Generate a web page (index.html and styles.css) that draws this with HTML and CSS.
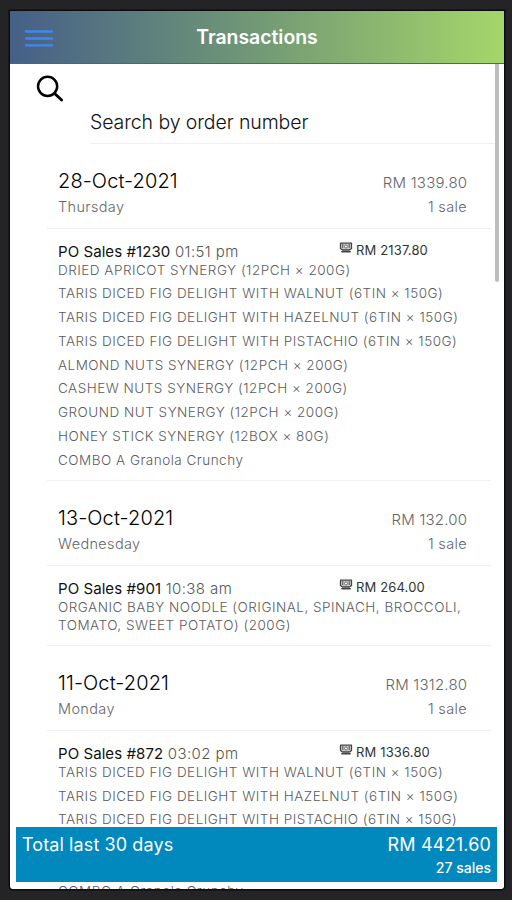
FILE: index.html
```
<!DOCTYPE html>
<html lang="en">
<head>
<meta charset="utf-8">
<title>Transactions</title>
<link rel="stylesheet" href="styles.css">
</head>
<body>
<svg class="defs" width="0" height="0" aria-hidden="true">
  <symbol id="cash" viewBox="0 0 14 12">
    <path d="M1.500 1.200h11v5.300l-2 1.500h-7l-2-1.500z" fill="#ccc" stroke="#444" stroke-width="1.300" stroke-linejoin="round"/>
    <circle cx="7" cy="4.500" r="1.500" fill="#fff" stroke="#555" stroke-width=".8"/>
    <path d="M3.800 2v4M10.200 2v4" stroke="#555" stroke-width="1"/>
    <path d="M2.800 9.800h8.400" stroke="#444" stroke-width="1.400" stroke-linecap="round"/>
  </symbol>
</svg>
<div class="screen">
  <header class="bar">
    <svg class="menu" viewBox="0 0 28 18" width="28" height="18"><path d="M1 2.500h26M1 9.500h26M1 16.300h26" stroke="#4387ee" stroke-width="2.300" stroke-linecap="round"/></svg>
    <h1>Transactions</h1>
  </header>
  <main class="list">
    <section class="search">
      <svg class="glass" viewBox="0 0 28 28" width="28" height="28" fill="none" stroke="#000" stroke-linecap="round"><circle cx="11.600" cy="11.300" r="9.600" stroke-width="2.500"/><path d="M18.600 18.500L25.600 25" stroke-width="2.900"/></svg>
      <div class="field">Search by order number</div>
    </section>

    <section class="day">
      <div class="row"><span class="date">28-Oct-2021</span><span class="sum">RM 1339.80</span></div>
      <div class="row sub"><span>Thursday</span><span>1 sale</span></div>
    </section>
    <section class="sale">
      <div class="head"><div class="order"><b>PO Sales #1230</b> 01:51 pm</div><div class="paid"><svg class="cash"><use href="#cash"/></svg>RM 2137.80</div></div>
      <p>DRIED APRICOT SYNERGY (12PCH × 200G)</p>
      <p>TARIS DICED FIG DELIGHT WITH WALNUT (6TIN × 150G)</p>
      <p>TARIS DICED FIG DELIGHT WITH HAZELNUT (6TIN × 150G)</p>
      <p>TARIS DICED FIG DELIGHT WITH PISTACHIO (6TIN × 150G)</p>
      <p>ALMOND NUTS SYNERGY (12PCH × 200G)</p>
      <p>CASHEW NUTS SYNERGY (12PCH × 200G)</p>
      <p>GROUND NUT SYNERGY (12PCH × 200G)</p>
      <p>HONEY STICK SYNERGY (12BOX × 80G)</p>
      <p>COMBO A Granola Crunchy</p>
    </section>

    <section class="day">
      <div class="row"><span class="date">13-Oct-2021</span><span class="sum">RM 132.00</span></div>
      <div class="row sub"><span>Wednesday</span><span>1 sale</span></div>
    </section>
    <section class="sale">
      <div class="head"><div class="order"><b>PO Sales #901</b> 10:38 am</div><div class="paid"><svg class="cash"><use href="#cash"/></svg>RM 264.00</div></div>
      <p>ORGANIC BABY NOODLE (ORIGINAL, SPINACH, BROCCOLI,<br>TOMATO, SWEET POTATO) (200G)</p>
    </section>

    <section class="day">
      <div class="row"><span class="date">11-Oct-2021</span><span class="sum">RM 1312.80</span></div>
      <div class="row sub"><span>Monday</span><span>1 sale</span></div>
    </section>
    <section class="sale">
      <div class="head"><div class="order"><b>PO Sales #872</b> 03:02 pm</div><div class="paid"><svg class="cash"><use href="#cash"/></svg>RM 1336.80</div></div>
      <p>TARIS DICED FIG DELIGHT WITH WALNUT (6TIN × 150G)</p>
      <p>TARIS DICED FIG DELIGHT WITH HAZELNUT (6TIN × 150G)</p>
      <p>TARIS DICED FIG DELIGHT WITH PISTACHIO (6TIN × 150G)</p>
      <p class="gap"></p>
      <p class="gap"></p>
      <p>COMBO A Granola Crunchy</p>
    </section>
  </main>
  <div class="thumb"></div>
  <footer class="total">
    <div class="row"><span class="label">Total last 30 days</span><span class="amount">RM 4421.60</span></div>
    <div class="count">27 sales</div>
  </footer>
</div>
</body>
</html>
```
FILE: styles.css
```
* { box-sizing: border-box; }
body {
  margin: 0;
  height: 900px;
  padding: 11px 8px 11px 10px;
  background: #242326;
  font-family: Inter, "Liberation Sans", sans-serif;
  overflow: hidden;
}
.defs { position: absolute; }
.screen {
  position: relative;
  height: 878px;
  background: #fff;
  overflow: hidden;
  box-shadow: 0 0 0 1.500px #0c0c0e;
  border-radius: 0 0 3px 3px;
}
.bar {
  height: 53px;
  display: grid;
  grid-template-columns: 90px 1fr 90px;
  align-items: center;
  background: linear-gradient(90deg, #455f87, #749b75 52%, #a5d66a);
  border-bottom: 1px solid #536955;
}
.menu { margin: 1px 0 0 15px; }
.bar h1 {
  margin: 0;
  text-align: center;
  color: #fff;
  font-size: 19.400px;
  font-weight: 600;
  line-height: 24px;
}
.search { height: 80px; padding: 11px 8px 0 26px; }
.glass { display: block; }
.field {
  margin-left: 54px;
  height: 41px;
  padding-top: 7px;
  font-size: 19.500px;
  letter-spacing: -.1px;
  line-height: 24px;
  font-weight: 300;
  color: #111;
  border-bottom: 1px solid #f0f0f0;
}
.row { display: flex; justify-content: space-between; align-items: center; }
.day, .sale { margin: 0 13px 0 37px; border-bottom: 1px solid #f0f0f0; }
.day { height: 84.500px; padding: 24px 24px 0 11px; }
.date { font-size: 20px; line-height: 26px; font-weight: 300; letter-spacing: .1px; color: #000; }
.sum { font-size: 15px; font-weight: 300; letter-spacing: .22px; color: #666; padding-top: 2px; margin-right: -.3px; }
.sub { font-size: 14.500px; line-height: 25px; font-weight: 300; letter-spacing: .35px; color: #666; }
.sale { padding: 13px 0 5.700px 11px; }
.head { display: flex; height: 19px; line-height: 20px; }
.order { width: 281px; font-size: 15px; font-weight: 300; letter-spacing: .4px; color: #555; white-space: nowrap; }
.order b { font-weight: 400; letter-spacing: .07px; color: #111; }
.paid { display: flex; font-size: 13px; line-height: 16px; font-weight: 400; letter-spacing: .15px; color: #333; white-space: nowrap; }
.cash { width: 14px; height: 12px; margin: 0 3px 0 0; }
.sale p {
  margin: 0 0 5.800px;
  font-size: 13.500px;
  line-height: 18px;
  font-weight: 300;
  letter-spacing: .5px;
  color: #5c5c5c;
  white-space: nowrap;
}
.sale .gap { height: 18px; }
.thumb { position: absolute; top: 53px; right: 5px; width: 4px; height: 218px; background: #bdbdbd; border-radius: 0 0 2px 2px; }
.total {
  position: absolute;
  left: 6px;
  right: 7px;
  bottom: 7px;
  height: 55px;
  padding: 6px 6px 0;
  background: #0188bd;
  color: #fff;
  font-size: 18px;
  line-height: 24px;
}
.label { letter-spacing: .1px; }
.amount { letter-spacing: .2px; margin-right: -.2px; }
.count { text-align: right; font-size: 14px; font-weight: 500; line-height: 22px; }
```
